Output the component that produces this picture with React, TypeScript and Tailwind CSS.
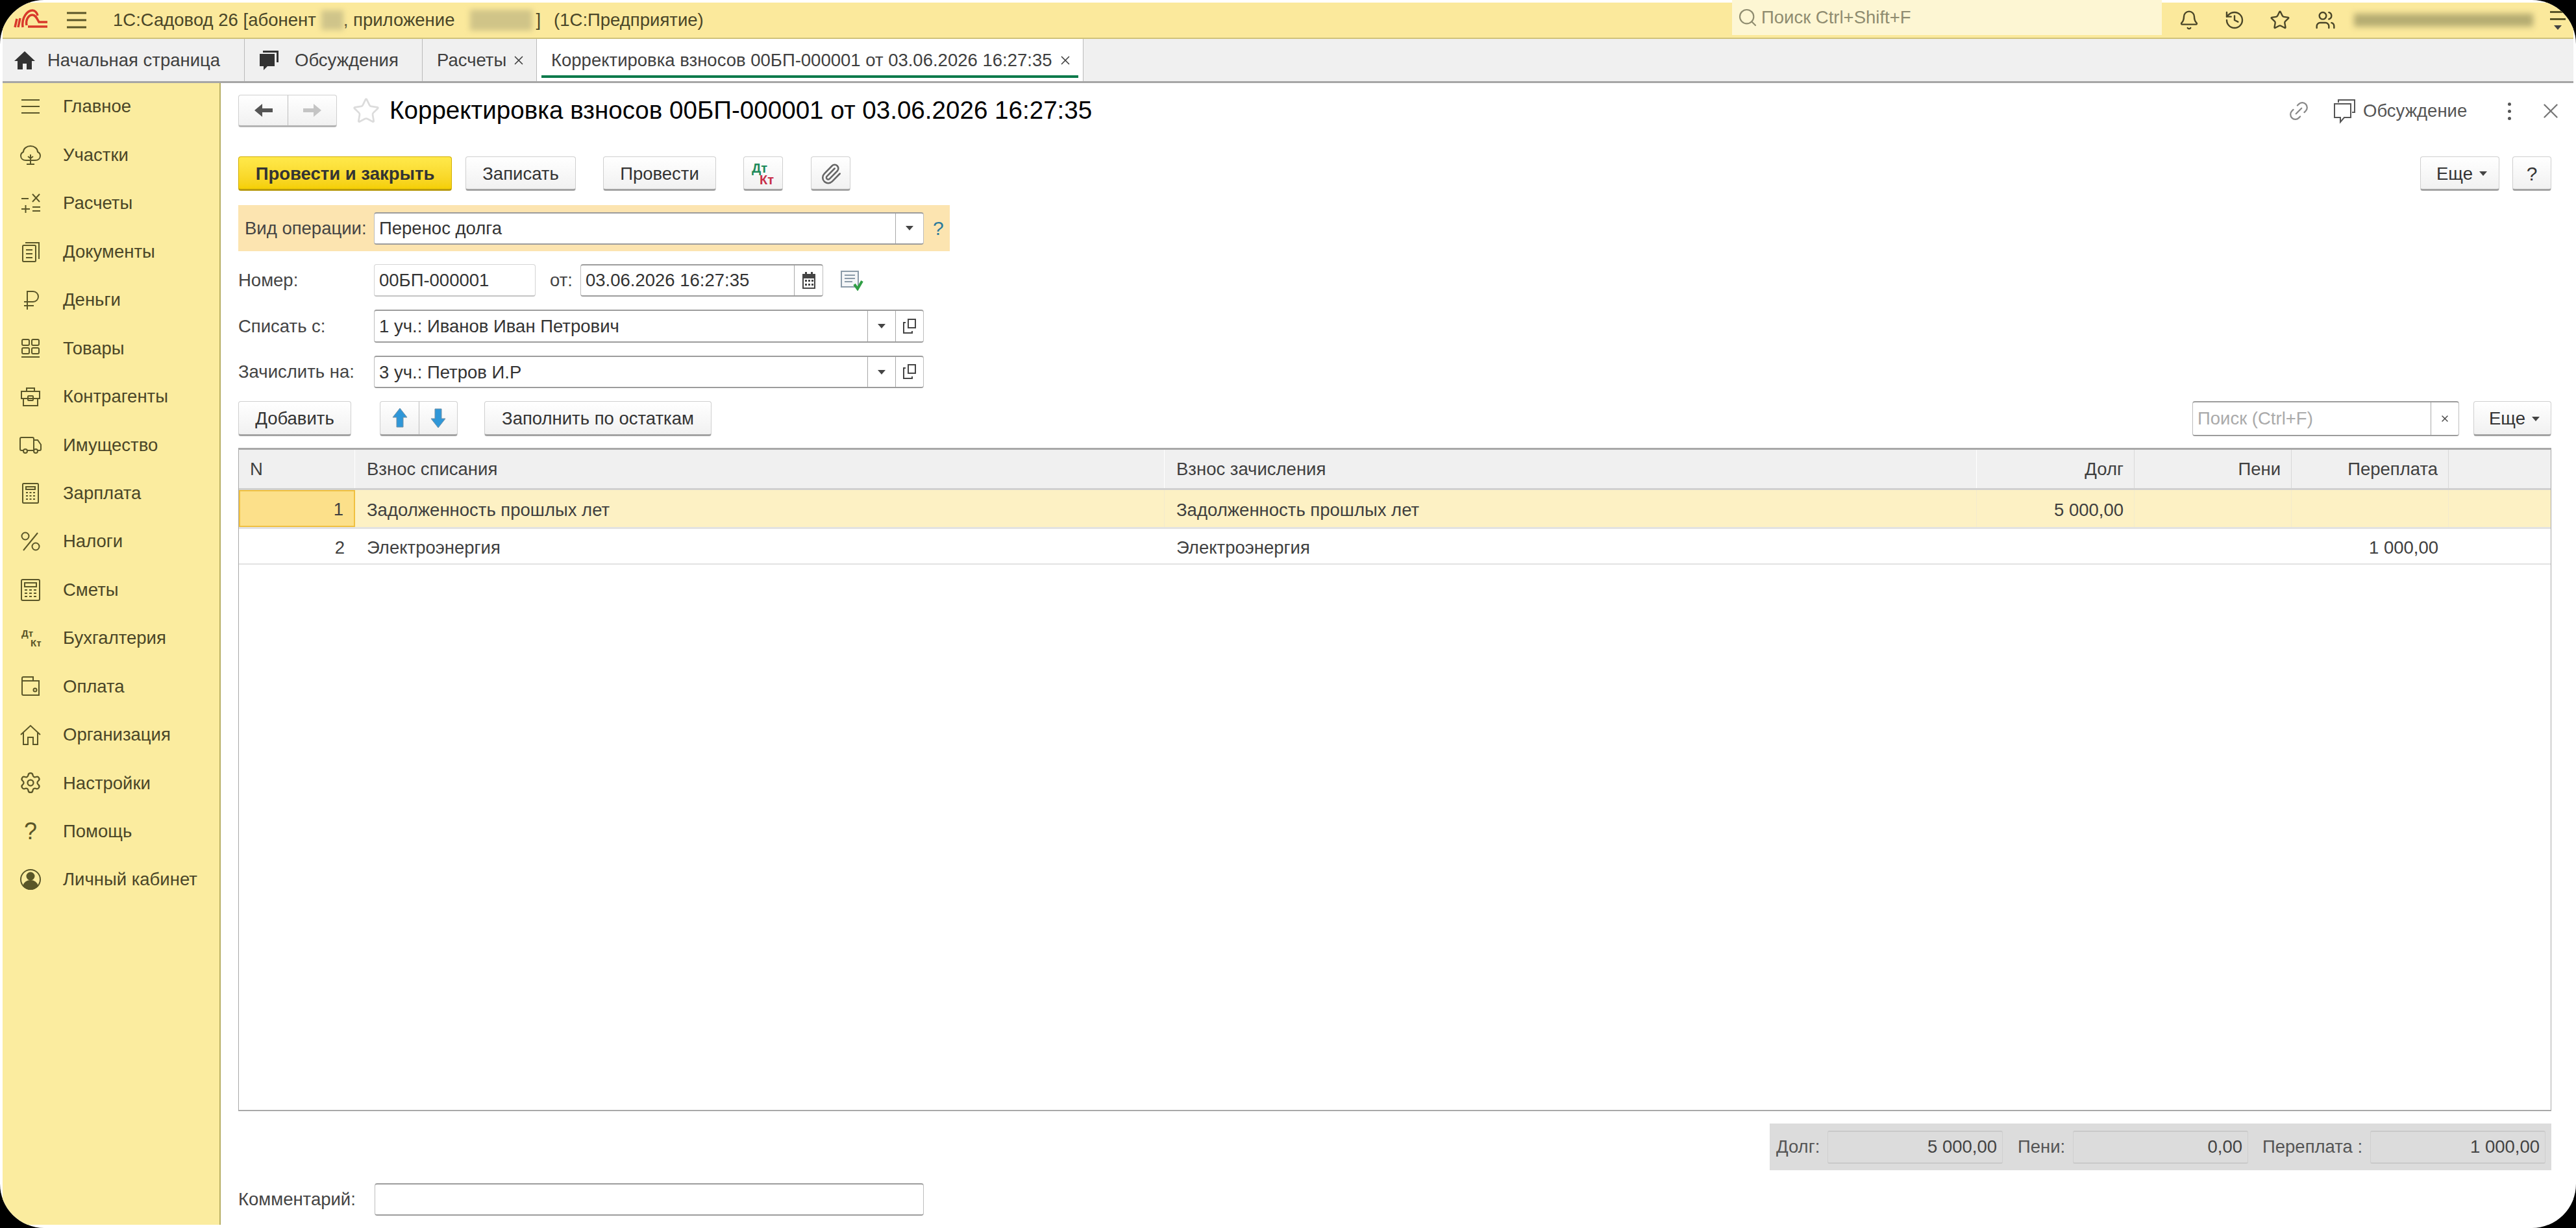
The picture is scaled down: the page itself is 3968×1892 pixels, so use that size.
import type { ReactNode } from "react";
import { Bell, History, Star, Users, Link2, Paperclip, Search, X, Settings } from "lucide-react";

const ink = "#5a5628";

const sideIcons: Record<string, ReactNode> = {
  main: <path d="M4 8h28M4 18h28M4 28h28" />,
  plots: (
    <>
      <path d="M11 26c-5 0-8-3-8-7 0-3 2-5 4-6 0-5 5-9 11-9s11 4 11 9c2 1 4 3 4 6 0 4-3 7-8 7H11z" />
      <path d="M18 17v15M12 32h12M18 23l-4-3M18 23l4-3" />
    </>
  ),
  calc: <path d="M4 11h11M21 4l11 12M32 4 21 16M4 27h13M10.500 21v12M21 24h12M21 30h12" />,
  docs: (
    <>
      <rect x="6" y="8" width="20" height="25" rx="1.500" />
      <path d="M10 4h21v25M11 15h10M11 21h10M11 27h10" />
    </>
  ),
  money: <path d="M13 33V5h9a8 8 0 0 1 0 16H8M8 27h15" />,
  goods: (
    <>
      <rect x="5" y="5" width="11" height="9" rx="2" />
      <rect x="20" y="5" width="11" height="9" rx="2" />
      <rect x="5" y="18" width="11" height="9" rx="2" />
      <rect x="20" y="18" width="11" height="9" rx="2" />
      <path d="M4 32h28" />
    </>
  ),
  partners: (
    <>
      <path d="M12 10V5h12v5M4 10h28v11H4zM7 21v11h22V21" />
      <rect x="14" y="17" width="8" height="7" rx="1" />
    </>
  ),
  property: (
    <>
      <path d="M7 27H4a2 2 0 0 1-2-2V9a2 2 0 0 1 2-2h17a2 2 0 0 1 2 2v18H13M23 11h6l5 7v7a2 2 0 0 1-2 2h-3M23 27" />
      <circle cx="10" cy="28" r="3" />
      <circle cx="26" cy="28" r="3" />
    </>
  ),
  salary: (
    <>
      <rect x="6" y="3" width="24" height="30" rx="1.500" />
      <path d="M11 8h14v4H11zM11 17h3M16.500 17h3M22 17h3M11 22h3M16.500 22h3M22 22h3M11 27h3M16.500 27h3M22 27h3" />
    </>
  ),
  taxes: (
    <>
      <circle cx="10" cy="10" r="5.500" />
      <circle cx="26" cy="26" r="5.500" />
      <path d="M29 5 7 32" />
    </>
  ),
  budget: (
    <>
      <rect x="4" y="2" width="28" height="32" rx="2" />
      <path d="M9 7h18v6H9zM9 18h4M16 18h4M23 18h4M9 23h4M16 23h4M23 23h4M9 28h4M16 28h4M23 28h4" />
    </>
  ),
  pay: (
    <>
      <path d="M5 10V6a2 2 0 0 1 2-2h15v6M5 10h26v22H7a2 2 0 0 1-2-2V10z" />
      <circle cx="25" cy="24" r="2.500" />
    </>
  ),
  org: <path d="M3 18 18 4l15 14M7 15v18h7V22h8v11h7V15" />,
  cabinet: (
    <>
      <circle cx="18" cy="18" r="15" />
      <circle cx="18" cy="13" r="5.500" fill={ink} />
      <path d="M7 28c2-6 6-8 11-8s9 2 11 8c-3 3-7 5-11 5s-8-2-11-5z" fill={ink} />
    </>
  ),
};

const sideItems: { key: string; label: string }[] = [
  { key: "main", label: "Главное" },
  { key: "plots", label: "Участки" },
  { key: "calc", label: "Расчеты" },
  { key: "docs", label: "Документы" },
  { key: "money", label: "Деньги" },
  { key: "goods", label: "Товары" },
  { key: "partners", label: "Контрагенты" },
  { key: "property", label: "Имущество" },
  { key: "salary", label: "Зарплата" },
  { key: "taxes", label: "Налоги" },
  { key: "budget", label: "Сметы" },
  { key: "dtkt", label: "Бухгалтерия" },
  { key: "pay", label: "Оплата" },
  { key: "org", label: "Организация" },
  { key: "settings", label: "Настройки" },
  { key: "help", label: "Помощь" },
  { key: "cabinet", label: "Личный кабинет" },
];

const SideIcon = ({ name }: { name: string }) => {
  if (name === "dtkt") {
    return (
      <div className="relative w-9 h-9 text-[15px] leading-none font-bold text-[#5a5628]">
        <span className="absolute left-[4px] top-[3px]">Дт</span>
        <span className="absolute left-[18px] top-[18px]">Кт</span>
      </div>
    );
  }
  if (name === "settings") return <Settings className="w-9 h-9 text-[#5a5628]" strokeWidth={1.5} />;
  if (name === "help") return <div className="w-9 h-9 text-center text-[36px] leading-9 text-[#5a5628]">?</div>;
  return (
    <svg className="w-9 h-9" viewBox="0 0 36 36" fill="none" stroke={ink} strokeWidth={2}>
      {sideIcons[name]}
    </svg>
  );
};

const Caret = () => <span className="w-0 h-0 border-x-[6px] border-x-transparent border-t-[7px] border-t-[#444]" />;

const Btn = ({ children, className = "" }: { children: ReactNode; className?: string }) => (
  <div className={`h-full flex items-center justify-center pt-[2px] rounded-[4px] border border-[#cfcfcf] border-b-[3px] border-b-[#a3a3a3] bg-gradient-to-b from-white to-[#f1f1f1] text-[#333] ${className}`}>
    {children}
  </div>
);

const Field = ({ value, className = "", tight, ref2 }: { value: string; className?: string; tight?: boolean; ref2?: boolean }) => (
  <div className={`h-full flex rounded-[4px] border border-[#bdbdbd] border-t-2 border-t-[#9c9c9c] border-b-2 border-b-[#9c9c9c] bg-white ${className}`}>
    <div className="flex-1 flex items-center pl-[7px] pt-[1px] text-[#333]">{value}</div>
    {tight && (
      <div className="w-[43px] flex items-center justify-center border-l border-[#a8a8a8]">
        <Caret />
      </div>
    )}
    {ref2 && (
      <div className="w-[43px] flex items-center justify-center border-l border-[#a8a8a8]">
        <svg className="w-6 h-7" viewBox="0 0 24 28" fill="none" stroke="#444" strokeWidth={2}>
          <rect x="10" y="3" width="11" height="13" />
          <path d="M6 8H3v16h3M3 24h13v-3" />
        </svg>
      </div>
    )}
  </div>
);

const gridCols = "grid grid-cols-[179px_1247px_1251px_243px_242px_242px_1fr]";

const TotalBox = ({ value }: { value: string }) => (
  <div className="w-[270px] h-[51px] flex items-center justify-end pr-[8px] rounded-[3px] border border-[#cfcfcf] border-y-2 border-y-[#c9c9c9] text-[#444]">
    {value}
  </div>
);

export default function App() {
  return (
    <div className="w-full h-[1892px] bg-black font-['Liberation_Sans',Arial,sans-serif] text-[27.500px] leading-none">
      <div className="h-full rounded-[68px] bg-white overflow-hidden pt-[4px] pl-[4px] pr-[4px] pb-[5px] flex flex-col">
        {/* top bar */}
        <header className="h-[56px] shrink-0 flex items-center bg-[#fbe99c] border-b-2 border-[#cfc27a] text-[#4a4628]">
          <svg className="ml-[16px] w-[60px] h-[36px] shrink-0" viewBox="0 0 60 36" fill="none" stroke="#d8392b" strokeWidth={3.500}>
            <path d="M3 29 6 16M8 29l3-14" />
            <path d="M15 29C13 14 22 3 30 3c4 0 7 4 8 8" />
            <path d="M21 26c-2-10 4-16 9-16s7 6 10 11h13" />
            <path d="M23 28h30" />
          </svg>
          <svg className="ml-[22px] w-[32px] h-[28px] shrink-0" viewBox="0 0 32 28" stroke={ink} strokeWidth={3}>
            <path d="M1 3h30M1 14h30M1 25h30" />
          </svg>
          <div className="ml-[40px] flex items-center whitespace-nowrap">
            <span>1С:Садовод 26 [абонент</span>
            <span className="ml-[8px] w-[34px] h-[30px] bg-[#cfc48a] blur-[4px]" />
            <span>, приложение</span>
            <span className="ml-[24px] w-[96px] h-[32px] bg-[#d0c488] blur-[4px]" />
            <span className="ml-[5px]">]</span>
            <span className="ml-[20px]">(1С:Предприятие)</span>
          </div>
          <div className="ml-auto w-[662px] h-full flex items-center bg-[#fdf6d3] pl-[8px] mb-[8px] text-[#8f8c70]">
            <Search className="w-[32px] h-[36px] text-[#8f8c70]" strokeWidth={1.6} />
            <span className="ml-[5px]">Поиск Ctrl+Shift+F</span>
          </div>
          <div className="ml-[26px] w-[32px] flex justify-center"><Bell className="w-8 h-9" strokeWidth={1.8} /></div>
          <div className="ml-[38px] w-[32px] flex justify-center"><History className="w-9 h-9" strokeWidth={1.8} /></div>
          <div className="ml-[38px] w-[32px] flex justify-center"><Star className="w-9 h-9" strokeWidth={1.8} /></div>
          <div className="ml-[38px] w-[32px] flex justify-center"><Users className="w-9 h-9" strokeWidth={1.8} /></div>
          <div className="ml-[28px] w-[276px] h-[20px] bg-[#b5ac72] blur-[5px]" />
          <div className="ml-[26px] mr-[12px] w-[24px] flex flex-col gap-[8px] items-center">
            <div className="w-[24px] h-[3px] bg-[#5a5628]" />
            <div className="w-[24px] h-[3px] bg-[#5a5628]" />
            <Caret />
          </div>
        </header>

        {/* tabs */}
        <nav className="h-[68px] shrink-0 flex bg-[#f0f0f0] border-b-[3px] border-[#a6a6a6] text-[#3f3f3f]">
          <div className="w-[373px] flex items-center border-r border-[#bbb]">
            <svg className="ml-[18px] w-[32px] h-[30px]" viewBox="0 0 32 30" fill="#333">
              <path d="M16 1 0 16h5v13h8v-9h6v9h8V16h5z" />
            </svg>
            <span className="ml-[19px]">Начальная страница</span>
          </div>
          <div className="w-[274px] flex items-center border-r border-[#bbb]">
            <svg className="ml-[20px] w-[36px] h-[36px]" viewBox="0 0 36 36" fill="#333">
              <path d="M8 3h24v18h-3V6H8z" />
              <path d="M3 8h23v19H15l-6 6v-6H3z" />
            </svg>
            <span className="ml-[21px]">Обсуждения</span>
          </div>
          <div className="w-[176px] flex items-center border-r border-[#bbb]">
            <span className="ml-[22px]">Расчеты</span>
            <X className="ml-[8px] w-[22px] h-[22px]" strokeWidth={1.8} />
          </div>
          <div className="w-[842px] relative flex items-center bg-white border-r border-[#bbb]">
            <span className="ml-[22px] whitespace-nowrap">Корректировка взносов 00БП-000001 от 03.06.2026 16:27:35</span>
            <X className="ml-[10px] w-[22px] h-[22px]" strokeWidth={1.8} />
            <div className="absolute left-[7px] right-[7px] bottom-[5px] h-[4px] bg-[#0b7a4b]" />
          </div>
        </nav>

        <div className="flex-1 flex min-h-0">
          {/* sidebar */}
          <aside className="w-[336px] shrink-0 bg-[#fbec9f] border-r-2 border-[#b7ae63] text-[#4a4628]">
            <ul className="-mt-[1px]">
              {sideItems.map((item) => (
                <li key={item.key} className="h-[74.450px] flex items-center pl-[25px] gap-[32px]">
                  <SideIcon name={item.key} />
                  <span className="whitespace-nowrap">{item.label}</span>
                </li>
              ))}
            </ul>
          </aside>

          {/* document form */}
          <main className="flex-1 min-w-0 flex flex-col bg-white pl-[27px] pr-[34px] text-[#444]">
            <div className="mt-[18px] h-[50px] flex items-center">
              <div className="w-[152px] h-full flex rounded-[4px] border border-[#cfcfcf] border-b-[3px] border-b-[#b5b5b5] bg-gradient-to-b from-white to-[#f1f1f1]">
                <div className="w-[76px] flex items-center justify-center border-r border-[#bdbdbd]">
                  <ArrowLeftIcon color="#555" />
                </div>
                <div className="flex-1 flex items-center justify-center">
                  <ArrowRightIcon color="#c4c4c4" />
                </div>
              </div>
              <Star className="ml-[23px] w-[44px] h-[44px] text-[#dcdcdc]" strokeWidth={1.5} />
              <h1 className="ml-[14px] -mt-[2px] text-[38.600px] font-normal text-black whitespace-nowrap">Корректировка взносов 00БП-000001 от 03.06.2026 16:27:35</h1>
              <div className="ml-auto flex items-center text-[#555]">
                <Link2 className="w-[36px] h-[36px] -rotate-45 text-[#888]" strokeWidth={1.5} />
                <svg className="ml-[35px] w-[36px] h-[40px]" viewBox="0 0 36 40" fill="none" stroke="#555" strokeWidth={2}>
                  <path d="M8 7V3h25v19h-4" />
                  <path d="M2 9h25v21H17l-6 7v-7H2z" />
                </svg>
                <span className="ml-[10px] w-[160px] whitespace-nowrap">Обсуждение</span>
                <div className="ml-[63px] flex flex-col gap-[6px]">
                  <div className="w-[5px] h-[5px] rounded-full bg-[#555]" />
                  <div className="w-[5px] h-[5px] rounded-full bg-[#555]" />
                  <div className="w-[5px] h-[5px] rounded-full bg-[#555]" />
                </div>
                <X className="ml-[42px] -mr-[18px] w-[38px] h-[38px] text-[#777]" strokeWidth={1.5} />
              </div>
            </div>

            <div className="mt-[45px] h-[53px] flex">
              <div className="w-[329px] flex items-center justify-center pt-[2px] rounded-[4px] border border-[#d2ae00] border-b-[3px] border-b-[#b89a10] bg-gradient-to-b from-[#ffe94a] to-[#f5cf00] font-bold text-[#333]">
                Провести и закрыть
              </div>
              <Btn className="ml-[21px] w-[170px]">Записать</Btn>
              <Btn className="ml-[42px] w-[174px]">Провести</Btn>
              <Btn className="ml-[42px] w-[61px] relative font-bold text-[20px]">
                <span className="absolute left-[12px] top-[7px] text-[#1e8a5a]">Дт</span>
                <span className="absolute left-[24px] top-[25px] text-[#c8304a]">Кт</span>
              </Btn>
              <Btn className="ml-[43px] w-[61px]">
                <Paperclip className="w-[34px] h-[34px] text-[#666]" strokeWidth={1.8} />
              </Btn>
              <Btn className="ml-auto w-[122px] gap-[10px] pl-[6px]">
                Еще <Caret />
              </Btn>
              <Btn className="ml-[20px] w-[60px] text-[30px]">?</Btn>
            </div>

            <div className="mt-[22px] w-[1096px] h-[71px] flex items-center bg-[#fce4b0] pl-[10px]">
              <span className="w-[199px] whitespace-nowrap">Вид операции:</span>
              <div className="h-[50px] w-[847px]">
                <Field value="Перенос долга" tight />
              </div>
              <span className="ml-[14px] text-[30px] text-[#2b7a9c]">?</span>
            </div>

            <div className="mt-[20px] h-[50px] flex items-center">
              <span className="w-[209px]">Номер:</span>
              <div className="w-[249px] h-full flex items-center pl-[7px] rounded-[4px] border border-[#d4d4d4] border-b-2 border-b-[#c4c4c4] text-[#333]">00БП-000001</div>
              <span className="ml-[22px] w-[47px]">от:</span>
              <div className="w-[374px] h-full">
                <div className="h-full flex rounded-[4px] border border-[#bdbdbd] border-y-2 border-y-[#9c9c9c] bg-white">
                  <div className="flex-1 flex items-center pl-[7px] text-[#333]">03.06.2026 16:27:35</div>
                  <div className="w-[44px] flex items-center justify-center border-l border-[#a8a8a8]">
                    <svg className="w-[20px] h-[26px]" viewBox="0 0 20 26" fill="#444">
                      <path d="M4 0h3v3h6V0h3v3h4v23H0V3h4z" />
                      <path d="M2 10h16v14H2z" fill="#fff" />
                      <path d="M4 12h3v3H4zM9 12h3v3H9zM14 12h3v3h-3zM4 18h3v3H4zM9 18h3v3H9zM14 18h3v3h-3z" />
                    </svg>
                  </div>
                </div>
              </div>
              <svg className="ml-[26px] w-[36px] h-[32px]" viewBox="0 0 36 32" fill="none" stroke="#8a9aa8" strokeWidth={2}>
                <rect x="2" y="2" width="26" height="24" fill="#f4f6f8" />
                <path d="M7 8h16M7 13h16M7 18h12" />
                <path d="m22 22 5 7 7-12" stroke="#2f9e44" strokeWidth={4} />
              </svg>
            </div>

            <div className="mt-[20px] h-[51px] flex items-center">
              <span className="w-[209px]">Списать с:</span>
              <div className="w-[847px] h-full">
                <Field value="1 уч.: Иванов Иван Петрович" tight ref2 />
              </div>
            </div>

            <div className="mt-[20px] h-[50px] flex items-center">
              <span className="w-[209px]">Зачислить на:</span>
              <div className="w-[847px] h-full">
                <Field value="3 уч.: Петров И.Р" tight ref2 />
              </div>
            </div>

            <div className="mt-[20px] h-[54px] flex">
              <Btn className="w-[174px]">Добавить</Btn>
              <div className="ml-[44px] w-[120px] h-full flex rounded-[4px] border border-[#cfcfcf] border-b-[3px] border-b-[#a3a3a3] bg-gradient-to-b from-white to-[#f1f1f1]">
                <div className="w-[60px] flex items-center justify-center border-r border-[#bdbdbd]">
                  <svg className="w-[26px] h-[32px]" viewBox="0 0 26 32" fill="#2f97d8" stroke="#6f8fa6" strokeWidth={1}>
                    <path d="M13 1 24 15h-6v15H8V15H2z" />
                  </svg>
                </div>
                <div className="flex-1 flex items-center justify-center">
                  <svg className="w-[26px] h-[32px]" viewBox="0 0 26 32" fill="#2f97d8" stroke="#6f8fa6" strokeWidth={1}>
                    <path d="M13 31 24 17h-6V2H8v15H2z" />
                  </svg>
                </div>
              </div>
              <Btn className="ml-[41px] w-[350px]">Заполнить по остаткам</Btn>
              <div className="ml-auto w-[411px] h-full flex rounded-[4px] border border-[#bdbdbd] border-y-2 border-y-[#9c9c9c]">
                <div className="flex-1 flex items-center pl-[7px] text-[#aaa]">Поиск (Ctrl+F)</div>
                <div className="w-[43px] flex items-center justify-center border-l border-[#a8a8a8]">
                  <X className="w-[16px] h-[16px] text-[#444]" strokeWidth={2} />
                </div>
              </div>
              <Btn className="ml-[22px] w-[120px] gap-[10px] pl-[6px]">
                Еще <Caret />
              </Btn>
            </div>

            {/* table */}
            <section className="mt-[18px] h-[1022px] shrink-0 border border-[#a8a8a8] border-t-[3px] border-b-2 text-[#3f3f3f]">
              <div className={`${gridCols} h-[62px] bg-[#f0f0f0] border-b-[3px] border-[#d0d0d0]`}>
                <div className="flex items-center pl-[17px] border-r border-white">N</div>
                <div className="flex items-center pl-[18px] border-r border-white">Взнос списания</div>
                <div className="flex items-center pl-[18px] border-r border-white">Взнос зачисления</div>
                <div className="flex items-center justify-end pr-[16px] border-r border-[#d8d8d8]">Долг</div>
                <div className="flex items-center justify-end pr-[16px] border-r border-[#d8d8d8]">Пени</div>
                <div className="flex items-center justify-end pr-[16px] border-r border-[#d8d8d8]">Переплата</div>
                <div />
              </div>
              <div className={`${gridCols} h-[60px] bg-[#fdf1c4] border-b-[3px] border-[#e2e2e2]`}>
                <div className="flex items-center justify-end pr-[16px] pt-[2px] bg-[#fce08a] border-2 border-[#f0c040]">1</div>
                <div className="flex items-center pl-[18px] pt-[4px] border-r border-[#f3ebcd]">Задолженность прошлых лет</div>
                <div className="flex items-center pl-[18px] pt-[4px] border-r border-[#f3ebcd]">Задолженность прошлых лет</div>
                <div className="flex items-center justify-end pr-[16px] pt-[4px] border-r border-[#f3ebcd]">5 000,00</div>
                <div className="border-r border-[#f3ebcd]" />
                <div className="border-r border-[#f3ebcd]" />
                <div />
              </div>
              <div className={`${gridCols} h-[55px] border-b-2 border-[#e2e2e2]`}>
                <div className="flex items-center justify-end pr-[16px] pt-[4px]">2</div>
                <div className="flex items-center pl-[18px] pt-[4px]">Электроэнергия</div>
                <div className="flex items-center pl-[18px] pt-[4px]">Электроэнергия</div>
                <div />
                <div />
                <div className="flex items-center justify-end pr-[16px] pt-[4px]">1 000,00</div>
                <div />
              </div>
            </section>

            <div className="mt-[19px] self-end w-[1204px] h-[72px] flex items-center bg-[#dcdcdc] pl-[10px] text-[#555]">
              <span className="w-[79px]">Долг:</span>
              <TotalBox value="5 000,00" />
              <span className="ml-[23px] w-[85px]">Пени:</span>
              <TotalBox value="0,00" />
              <span className="ml-[22px] w-[166px] whitespace-nowrap">Переплата :</span>
              <TotalBox value="1 000,00" />
            </div>

            <div className="mt-[20px] h-[50px] flex items-center">
              <span className="w-[210px]">Комментарий:</span>
              <div className="w-[846px] h-full rounded-[4px] border border-[#bdbdbd] border-y-2 border-y-[#9c9c9c] bg-white" />
            </div>
          </main>
        </div>
      </div>
    </div>
  );
}

function ArrowLeftIcon({ color }: { color: string }) {
  return (
    <svg className="w-[32px] h-[24px]" viewBox="0 0 32 24" fill={color}>
      <path d="M14 2 2 12l12 10v-7h16V9H14z" />
    </svg>
  );
}

function ArrowRightIcon({ color }: { color: string }) {
  return (
    <svg className="w-[32px] h-[24px]" viewBox="0 0 32 24" fill={color}>
      <path d="M18 2l12 10-12 10v-7H2V9h16z" />
    </svg>
  );
}
